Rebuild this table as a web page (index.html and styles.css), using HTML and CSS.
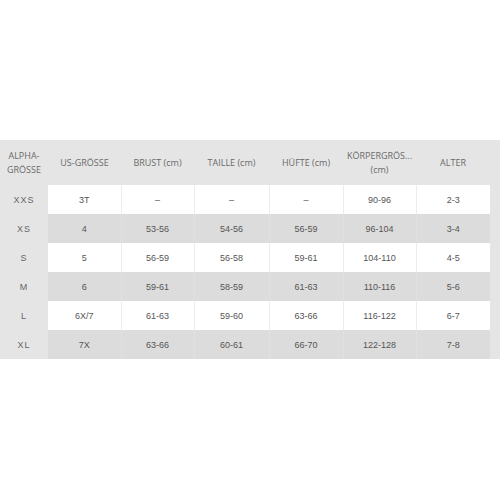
FILE: index.html
```html
<!DOCTYPE html>
<html lang="de">
<head>
<meta charset="utf-8">
<title>Größentabelle</title>
<link rel="stylesheet" href="styles.css">
</head>
<body>
<div class="panel">
  <table class="sizes">
    <colgroup>
      <col class="c0"><col class="c1"><col class="c2"><col class="c3"><col class="c4"><col class="c5"><col class="c6">
    </colgroup>
    <thead>
      <tr>
        <th>ALPHA-<br>GRÖSSE</th>
        <th>US-GRÖSSE</th>
        <th>BRUST (cm)</th>
        <th>TAILLE (cm)</th>
        <th>HÜFTE (cm)</th>
        <th>KÖRPERGRÖS...<br>(cm)</th>
        <th>ALTER</th>
      </tr>
    </thead>
    <tbody>
      <tr class="odd"><th>XXS</th><td>3T</td><td>–</td><td>–</td><td>–</td><td>90-96</td><td>2-3</td></tr>
      <tr class="even"><th>XS</th><td>4</td><td>53-56</td><td>54-56</td><td>56-59</td><td>96-104</td><td>3-4</td></tr>
      <tr class="odd"><th>S</th><td>5</td><td>56-59</td><td>56-58</td><td>59-61</td><td>104-110</td><td>4-5</td></tr>
      <tr class="even"><th>M</th><td>6</td><td>59-61</td><td>58-59</td><td>61-63</td><td>110-116</td><td>5-6</td></tr>
      <tr class="odd"><th>L</th><td>6X/7</td><td>61-63</td><td>59-60</td><td>63-66</td><td>116-122</td><td>6-7</td></tr>
      <tr class="even"><th>XL</th><td>7X</td><td>63-66</td><td>60-61</td><td>66-70</td><td>122-128</td><td>7-8</td></tr>
    </tbody>
  </table>
</div>
</body>
</html>
```
FILE: styles.css
```css
html, body {
  margin: 0;
  padding: 0;
  background: #ffffff;
}

.panel {
  margin-top: 140px;
  background: #e5e5e5;
  width: 500px;
}

.sizes {
  width: 490px;
  table-layout: fixed;
  border-collapse: collapse;
  border-spacing: 0;
}

.c0 { width: 48px; }
.c1 { width: 73px; }
.c2 { width: 73px; }
.c3 { width: 75px; }
.c4 { width: 74px; }
.c5 { width: 73px; }
.c6 { width: 74px; }

.sizes thead th {
  height: 45px;
  padding: 0;
  font-family: "Open Sans", "Liberation Sans", sans-serif;
  font-size: 9px;
  font-weight: normal;
  line-height: 14px;
  color: #6a6a6a;
  text-align: center;
  vertical-align: middle;
}

.sizes tbody th,
.sizes tbody td {
  height: 29px;
  padding: 0;
  font-family: "Liberation Sans", Arial, sans-serif;
  font-size: 9px;
  font-weight: normal;
  color: #555555;
  text-align: center;
  vertical-align: middle;
}

.sizes tbody th {
  background: #e5e5e5;
  letter-spacing: 1px;
  color: #666666;
}

.sizes tbody td + td {
  border-left: 1px solid #ececec;
}

.sizes tr.odd td {
  background: #ffffff;
}

.sizes tr.even td {
  background: #dcdcdc;
  border-left-color: #e0e0e0;
}
```
